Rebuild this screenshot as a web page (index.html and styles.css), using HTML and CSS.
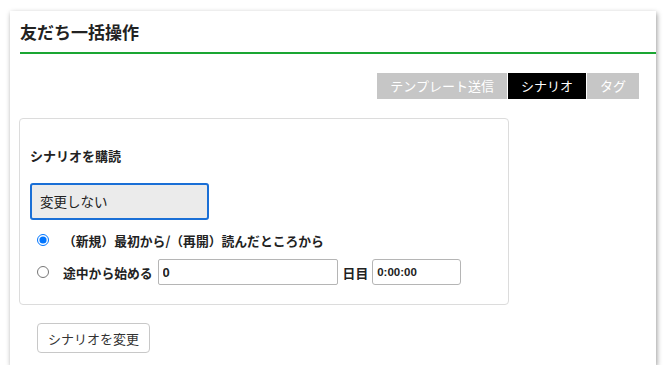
FILE: index.html
```html
<!DOCTYPE html>
<html lang="ja">
<head>
    <meta charset="UTF-8">
    <meta name="viewport" content="width=device-width, initial-scale=1.0">
    <title>友だち一括操作</title>
    <link rel="stylesheet" href="styles.css">
</head>
<body>
    <div class="card">
        <h1 class="card-title">友だち一括操作</h1>

        <!-- Tabs -->
        <div class="tabs">
            <span class="tab">テンプレート送信</span>
            <span class="tab active">シナリオ</span>
            <span class="tab">タグ</span>
        </div>

        <!-- Scenario panel -->
        <div class="panel">
            <p class="panel-label">シナリオを購読</p>
            <div class="select-box">変更しない</div>

            <label class="radio-row">
                <input type="radio" name="start" checked>
                <span>（新規）最初から/（再開）読んだところから</span>
            </label>
            <label class="radio-row">
                <input type="radio" name="start">
                <span>途中から始める</span>
                <input type="text" class="day-input" value="0">
                <span>日目</span>
                <input type="text" class="time-input" value="0:00:00">
            </label>
        </div>

        <button class="change-button">シナリオを変更</button>
    </div>
</body>
</html>
```

FILE: styles.css
```css
/* Main styling */
body {
    margin: 0;
    background: #ffffff;
    font-family: "Noto Sans CJK JP", "Liberation Sans", sans-serif;
    color: #222;
}

.card {
    width: 646px;
    margin: 11px 0 0 10px;
    padding: 0 0 12px 0;
    background: #ffffff;
    box-shadow: 1px 2px 5px rgba(0, 0, 0, 0.4);
}

.card-title {
    margin: 0 0 0 10px;
    padding: 8px 0 7px 0;
    font-size: 17px;
    line-height: 26px;
    font-weight: bold;
    border-bottom: 2px solid #1aa632;
}

.tabs {
    display: flex;
    justify-content: flex-end;
    gap: 1px;
    margin: 19px 17px 0 0;
}

.tab {
    height: 26px;
    line-height: 26px;
    padding: 0 13px;
    font-size: 13px;
    color: #ffffff;
    background: #c6c6c6;
}

.tab.active {
    background: #000000;
}

.panel {
    margin: 19px 0 0 9px;
    padding: 27px 10px 10px 10px;
    box-sizing: border-box;
    width: 490px;
    height: 187px;
    border: 1px solid #dcdcdc;
    border-radius: 4px;
}

.panel-label {
    margin: 0;
    font-size: 13px;
    line-height: 20px;
    font-weight: bold;
}

.select-box {
    width: 179px;
    height: 37px;
    box-sizing: border-box;
    margin-top: 17px;
    padding-left: 8px;
    line-height: 33px;
    font-size: 13.5px;
    background: #ebebeb;
    border: 2px solid #1a6fd6;
    border-radius: 3px;
}

.radio-row {
    display: flex;
    align-items: center;
    font-size: 12.8px;
    font-weight: bold;
    height: 26px;
}

.radio-row:first-of-type {
    margin-top: 7px;
}

.radio-row + .radio-row {
    margin-top: 6px;
}

.radio-row input[type="radio"] {
    width: 12px;
    height: 12px;
    margin: 0 14px 0 7px;
}

.day-input, .time-input {
    height: 26px;
    box-sizing: border-box;
    border: 1px solid #b5b5b5;
    border-radius: 2px;
    padding: 0 4px;
    font-family: "Liberation Sans", sans-serif;
    font-weight: bold;
    color: #222;
}

.day-input {
    width: 180px;
    margin: 0 5px 0 5px;
    font-size: 13px;
}

.time-input {
    width: 89px;
    margin-left: 4px;
    font-size: 11.5px;
    border-radius: 3px;
}

.change-button {
    display: block;
    margin: 18px 0 0 27px;
    height: 30px;
    padding: 0 10px;
    font-family: "Noto Sans CJK JP", sans-serif;
    font-size: 13px;
    color: #333;
    background: #ffffff;
    border: 1px solid #c8c8c8;
    border-radius: 4px;
}
```
